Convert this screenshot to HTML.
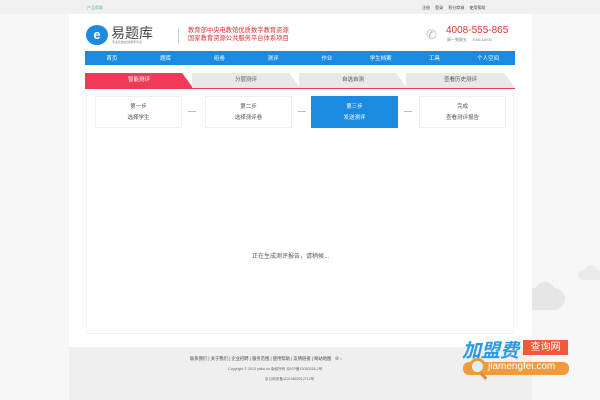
<!DOCTYPE html>
<html><head><meta charset="utf-8"><style>
*{margin:0;padding:0;box-sizing:border-box}
body{width:600px;height:400px;overflow:hidden;background:#f7f7f7;font-family:"Liberation Sans","Noto Sans CJK SC",sans-serif;position:relative;color:#555}
.col{position:absolute;left:69px;top:0;width:463px;height:400px;background:#fff}
.top{position:absolute;left:0;top:0;width:600px;height:14px;background:#f0f0f0;font-size:4.5px}
.a{position:absolute;font-size:5px;white-space:nowrap}
.nav{position:absolute;left:85px;top:51px;width:430px;height:14px;background:#1a8be0;display:flex;color:#fff;font-size:5.5px;align-items:center}
.nav div{flex:1;text-align:center}
.tab{position:absolute;top:73px;height:15px;font-size:5.5px;text-align:center;line-height:15px;background:#e8e8e8;color:#555;clip-path:polygon(0 0,90% 0,100% 100%,0 100%)}
.step{position:absolute;top:96px;height:32px;width:87px;text-align:center;font-size:5.5px;line-height:11px;padding-top:5px;background:#fff;border:1px solid #f0f0f0}
.dash{position:absolute;top:111px;width:8px;height:1px;background:#bbb}
</style></head><body>
<div style="position:absolute;left:520px;top:288px;width:45px;height:22px;border-radius:11px;background:#e6e6e6"></div>
<div style="position:absolute;left:535px;top:282px;width:20px;height:18px;border-radius:50%;background:#e6e6e6"></div>
<div style="position:absolute;left:578px;top:270px;width:30px;height:10px;border-radius:5px;background:#ebebeb"></div>
<div style="position:absolute;left:585px;top:265px;width:12px;height:10px;border-radius:50%;background:#ebebeb"></div>
<div class="col"></div>
<div class="top"></div>
<div class="a" style="left:87px;top:5px;color:#7aa;font-size:4px">产品帮助</div>
<div class="a" style="left:422px;top:5px;font-size:4px;word-spacing:4px;color:#444">注册 登录 积分商城 使用帮助</div>
<div style="position:absolute;left:86px;top:25px;width:22px;height:20px;border-radius:50%;background:#1a8be0;color:#fff;font-size:13px;text-align:center;line-height:19px;font-weight:bold">e</div>
<div class="a" style="left:111px;top:23px;font-size:14px;color:#444">易题库</div>
<div class="a" style="left:112px;top:40px;font-size:3px;color:#777">专业化的在线测评平台</div>
<div style="position:absolute;left:178px;top:29px;width:1px;height:14px;background:#ccc"></div>
<div class="a" style="left:188px;top:27px;font-size:6.3px;color:#d33;line-height:8px">教育部中央电教馆优质数字教育资源<br>国家教育资源公共服务平台体系项目</div>
<div class="a" style="left:426px;top:27px;font-size:13px;color:#bbb">✆</div>
<div class="a" style="left:446px;top:25px;font-size:10px;color:#d33">4008-555-865</div>
<div class="a" style="left:447px;top:37px;font-size:4px;color:#777">周一到周五 &nbsp;&nbsp;&nbsp;&nbsp;9:00-18:00</div>
<div class="nav"><div>首页</div><div>题库</div><div>组卷</div><div>测评</div><div>作业</div><div>学生档案</div><div>工具</div><div>个人空间</div></div>
<div class="tab" style="left:85px;width:108px;background:#ef3b58;color:#fff">智能测评</div>
<div class="tab" style="left:192px;width:108px">分层测评</div>
<div class="tab" style="left:299px;width:108px">自选自测</div>
<div class="tab" style="left:406px;width:109px">查看历史测评</div>
<div style="position:absolute;left:85px;top:88px;width:430px;height:1px;background:#ef3b58"></div>
<div style="position:absolute;left:86px;top:94px;width:428px;height:240px;border:1px solid #f3f3f3"></div>
<div class="step" style="left:95px">第一步<br>选择学生</div>
<div class="dash" style="left:188px"></div>
<div class="step" style="left:205px">第二步<br>选择测评卷</div>
<div class="dash" style="left:298px"></div>
<div class="step" style="left:311px;background:#1a8be0;color:#fff;border-color:#1a8be0">第三步<br>发送测评</div>
<div class="dash" style="left:404px"></div>
<div class="step" style="left:419px">完成<br>查看测评报告</div>
<div class="a" style="left:252px;top:251px;font-size:6px;color:#555">正在生成测评报告，请稍候...</div>
<div style="position:absolute;left:69px;top:347px;width:463px;height:53px;background:#efefef"></div>
<div class="a" style="left:190px;top:356px;font-size:4.3px;color:#444">联系我们 | 关于我们 | 企业招聘 | 服务范围 | 使用帮助 | 友情链接 | 网站地图 &nbsp; ⊕ ▫</div>
<div class="a" style="left:228px;top:367px;font-size:3.6px;color:#666">Copyright © 2013 yitiku.cn 版权所有 京ICP备13030318-2号</div>
<div class="a" style="left:265px;top:377px;font-size:3.6px;color:#666">京公网安备11010802012712号</div>
<div class="a" style="left:462px;top:336px;font-size:19px;font-weight:bold;font-style:italic;color:#2a9ae8">加盟费</div>
<div class="a" style="left:523px;top:340px;width:45px;height:15px;background:#ef5a3a;color:#fff;font-size:10px;text-align:center;line-height:15px">查询网</div>
<div style="position:absolute;left:463px;top:362px;width:106px;height:13px;border-radius:6px;background:#f29a3a"></div>
<div class="a" style="left:488px;top:361px;font-size:10px;color:#fff">jiamengfei.com</div>
<div style="position:absolute;left:469px;top:358px;width:17px;height:17px;border-radius:50%;border:3px solid #f29a3a;background:#dff0fb"></div>
<div style="position:absolute;left:482px;top:372px;width:3px;height:8px;background:#e08a2a;transform:rotate(-45deg)"></div>
</body></html>
